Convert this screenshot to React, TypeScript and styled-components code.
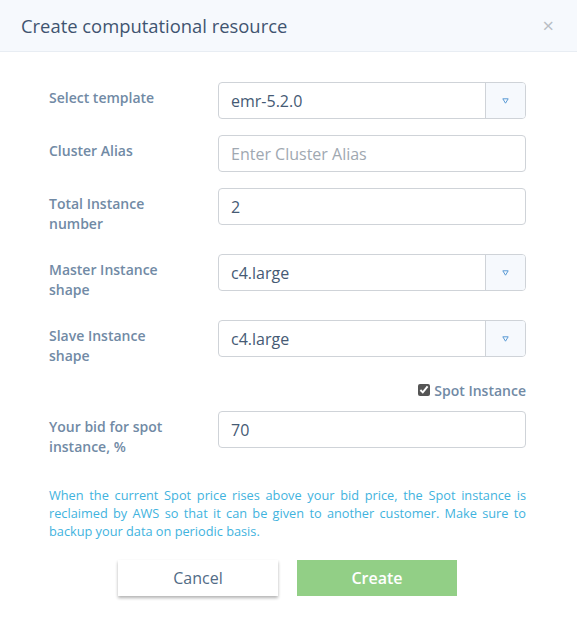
import React from 'react';
import styled, { createGlobalStyle } from 'styled-components';

const GlobalStyle = createGlobalStyle`
  html, body {
    margin: 0;
    padding: 0;
    background: #fff;
    font-family: 'Open Sans', 'Noto Sans', sans-serif;
  }
`;

type Row = {
  label: string;
  value?: string;
  placeholder?: string;
  select?: boolean;
};

const rows: Row[] = [
  { label: 'Select template', value: 'emr-5.2.0', select: true },
  { label: 'Cluster Alias', placeholder: 'Enter Cluster Alias' },
  { label: 'Total Instance number', value: '2' },
  { label: 'Master Instance shape', value: 'c4.large', select: true },
  { label: 'Slave Instance shape', value: 'c4.large', select: true },
];

const App: React.FC = () => {
  return (
    <>
      <GlobalStyle />
      <Dialog>
        <Header>
          <Title>Create computational resource</Title>
          <Close>×</Close>
        </Header>
        <Body>
          {rows.map((row) => (
            <FormRow key={row.label}>
              <Label>{row.label}</Label>
              <Field row={row} />
            </FormRow>
          ))}
          <CheckRow>
            <input type="checkbox" defaultChecked />
            <span>Spot Instance</span>
          </CheckRow>
          <FormRow>
            <Label>Your bid for spot instance, %</Label>
            <Field row={{ label: 'bid', value: '70' }} />
          </FormRow>
          <Note>
            When the current Spot price rises above your bid price, the Spot instance is reclaimed by AWS so
            that it can be given to another customer. Make sure to backup your data on periodic basis.
          </Note>
          <Actions>
            <Button>Cancel</Button>
            <Button primary>Create</Button>
          </Actions>
        </Body>
      </Dialog>
    </>
  );
};

const Field: React.FC<{ row: Row }> = ({ row }) => (
  <InputBox>
    <InputText placeholder={row.placeholder} defaultValue={row.value} readOnly={row.select} />
    {row.select && (
      <Caret>
        <svg width="7" height="6" viewBox="0 0 7 6">
          <path d="M0.8 0.8 H6.2 L3.5 5.2 Z" fill="none" stroke="#5b9bd5" strokeWidth="1" />
        </svg>
      </Caret>
    )}
  </InputBox>
);

export default App;

const Dialog = styled.div`
  width: 577px;
  min-height: 640px;
  background: #fff;
`;

const Header = styled.div`
  height: 52px;
  background: #f6f9fd;
  border-bottom: 1px solid #e8edf3;
  display: flex;
  align-items: center;
  justify-content: space-between;
  padding: 0 21px;
  box-sizing: border-box;
`;

const Title = styled.h1`
  margin: 0;
  font-size: 18.4px;
  font-weight: 400;
  color: #3f5470;
`;

const Close = styled.span`
  font-size: 20px;
  color: #b9bec4;
  line-height: 1;
  margin-right: 2px;
`;

const Body = styled.div`
  padding: 30px 51px 0 49px;
  display: flex;
  flex-direction: column;
`;

const FormRow = styled.div`
  display: flex;
  align-items: flex-start;
  margin-bottom: 16px;
`;

const Label = styled.label`
  width: 169px;
  padding: 6px 40px 4px 0;
  box-sizing: border-box;
  font-size: 14px;
  font-weight: 600;
  line-height: 20px;
  color: #718aa5;
`;

const InputBox = styled.div`
  flex: 1;
  height: 37px;
  display: flex;
  border: 1px solid #cfd3d8;
  border-radius: 4px;
  box-sizing: border-box;
  overflow: hidden;
`;

const InputText = styled.input`
  flex: 1;
  min-width: 0;
  border: none;
  outline: none;
  padding: 0 12px;
  font-family: 'Open Sans', sans-serif;
  font-size: 16px;
  color: #455a74;
  background: transparent;
  &::placeholder {
    color: #a0a8b1;
  }
`;

const Caret = styled.div`
  width: 39px;
  border-left: 1px solid #cfd3d8;
  background: #f6f9fd;
  display: flex;
  align-items: center;
  justify-content: center;
`;

const CheckRow = styled.label`
  display: flex;
  justify-content: flex-end;
  align-items: center;
  gap: 4px;
  height: 20px;
  margin: -6px 0 11px;
  font-size: 14px;
  font-weight: 600;
  color: #718aa5;
  input {
    margin: 0;
    width: 12px;
    height: 12px;
    accent-color: #555;
  }
`;

const Note = styled.p`
  margin: 9px 0 20px;
  font-size: 12.75px;
  line-height: 18px;
  color: #3fb3de;
  text-align: justify;
`;

const Actions = styled.div`
  display: flex;
  justify-content: center;
  gap: 19px;
`;

const Button = styled.button<{ primary?: boolean }>`
  width: 160px;
  height: 36px;
  border: none;
  font-family: 'Open Sans', sans-serif;
  font-size: 16px;
  font-weight: ${(p) => (p.primary ? 600 : 500)};
  color: ${(p) => (p.primary ? '#fff' : '#526b86')};
  background: ${(p) => (p.primary ? '#92cf86' : '#fff')};
  box-shadow: ${(p) => (p.primary ? 'none' : '0 2px 3px rgba(0, 0, 0, 0.3)')};
`;
